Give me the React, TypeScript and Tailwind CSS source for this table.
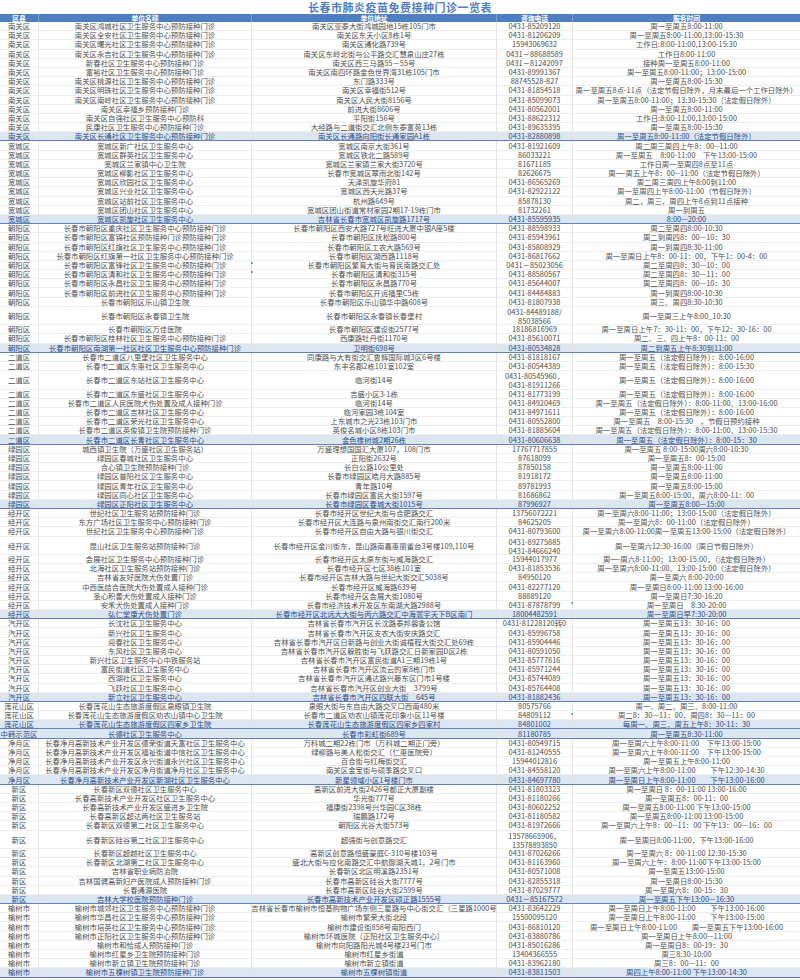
type Row = { name: string; addr: string; phone: string; time: string; tall?: boolean }
type Group = { district: string; rows: Row[] }

const r = (name: string, addr: string, phone: string, time: string, tall = false): Row => ({ name, addr, phone, time, tall })

const groups: Group[] = [
  {
    district: '南关区',
    rows: [
      r('南关区鸿城社区卫生服务中心预防接种门诊', '南关区亚泰大街鸿城园地15栋105门市', '0431-85209120', '周一至周五8:00-11:00'),
      r('南关区全安社区卫生服务中心预防接种门诊', '南关区东天小区8栋1号', '0431-81206209', '周一至周五8:00-11:00,13:00-15:30'),
      r('南关区曙光社区卫生服务中心预防接种门诊', '南关区通化路739号', '15943069632', '工作日:8:00-11:00,13:00-15:30'),
      r('南关区永吉社区卫生服务中心预防接种门诊', '南关区东岭北街与公平路交汇慧泉山庄27栋', '0431－88688589', '工作日8:00-11:00'),
      r('新春社区卫生服务中心预防接种门诊', '南关区西三马路55－55号', '0431－81242097', '接种周一至周五8:00-11:00'),
      r('富裕社区卫生服务中心预防接种门诊', '南关区南四环路金色世界湾31栋105门市', '0431-89991367', '周一至周五8:00-11:00；13:00-15:00'),
      r('南关区桃源社区卫生服务中心预防接种门诊', '东门路333号', '88745528-827', '周一至周五8:00-15:30'),
      r('南关区明珠社区卫生服务中心预防接种门诊', '南关区幸福街512号', '0431-81854518', '周一至周五8点-11点（法定节假日除外，月末最后一个工作日除外）'),
      r('南关区南岭社区卫生服务中心预防接种门诊', '南关区人民大街8156号', '0431-85099073', '周一至周五8:00-11:00；13:30-15:30（法定假日除外）'),
      r('南关区幸福乡预防接种门诊', '前进大街8606号', '0431-80562001', '周一至周五8:00-11:00'),
      r('南关区自强社区卫生服务中心预防科', '平阳街156号', '0431-88622312', '工作日:8:00-11:00,13:00-15:00'),
      r('民康社区卫生服务中心预防接种门诊', '大经路与二道街交汇北侧东泰富苑13栋', '0431-89635395', '周一至周五8:00-15:30'),
      r('南关区长通社区卫生服务中心预防接种门诊', '南关区长通路向阳街长通家园A1栋', '0431-82880898', '周一至周五8:00-11:00（法定节假日除外）'),
    ],
  },
  {
    district: '宽城区',
    rows: [
      r('宽城区新广社区卫生服务中心', '宽城区南京大街361号', '0431-81921609', '周二周三周四上午8：00--11:00'),
      r('宽城区群英社区卫生服务中心', '宽城区铁北二路589号', '86033221', '周一至周五　8:00-11:00　下午13:00-15:00'),
      r('宽城区兰家镇中心卫生院', '宽城区兰家镇兰家大街3720号', '81671185', '工作日周一至周四8点至11点'),
      r('宽城区柳影社区卫生服务中心', '长春市宽城区翠雨北街142号', '82626675', '周一-周五上午8：00--11:00（法定节假日除外）'),
      r('宽城区欣园社区卫生服务中心', '天泽凯旋华府81', '0431-86565269', '周二周三周四上午8:00到11:00'),
      r('宽城区兴业社区卫生服务中心', '宽城区西天光路37号', '0431-82922122', '周一至周四上午8:00-11:00（节假日除外）'),
      r('宽城区站前社区卫生服务中心', '杭州路649号', '85878130', '周二，周三，周四上午8点到11点接种'),
      r('宽城区团山社区卫生服务中心', '宽城区团山街道常材家园2期17-19栋门市', '81732261', '周一到周五'),
      r('宽城区凯旋社区卫生服务中心', '吉林省长春市宽城区凯旋路1717号', '0431-85595935', '8:00—20:00'),
    ],
  },
  {
    district: '朝阳区',
    rows: [
      r('长春市朝阳区重庆社区卫生服务中心预防接种门诊', '长春市朝阳区西安大路727号旺进大厦中银A座5楼', '0431-88598933', '周二至周四8:00-10:30'),
      r('长春市朝阳区富锦社区预防接种门诊预防接种门诊', '长春市朝阳区抚松路800号', '0431-85943961', '周二到周四8：00—10：30'),
      r('长春市朝阳区红旗社区卫生服务中心预防接种门诊', '长春市朝阳区工农大路569号', '0431-85808929', '周一到周四8:30-11:00'),
      r('长春市朝阳区红旗第一社区卫生服务中心预防接种门诊', '长春市朝阳区湖西路1118号', '0431-86817662', '周一至周日上午8：00-11：00，下午1：00-4：00'),
      r('长春市朝阳区富锋社区卫生服务中心预防接种门诊', '长春市朝阳区繁育大街与育民南路交汇处', '0431－85023056', '周二至周四8：30—10：00'),
      r('长春市朝阳区清和社区卫生服务中心预防接种门诊', '长春市朝阳区清和街315号', '0431-88580567', '周二至周四8：30—11：00'),
      r('长春市朝阳区永昌社区卫生服务中心预防接种门诊', '长春市朝阳区永昌路770号', '0431-85644007', '周二至周四8：00—10：30'),
      r('长春市朝阳区前进社区卫生服务中心预防接种门诊', '长春市朝阳区开运福里C5栋', '0431-84484883', '周一到周四8:00-10:30'),
      r('长春市朝阳区乐山镇卫生院', '长春市朝阳区乐山镇华中路608号', '0431-81807938', '周三、周四8:30-10:30'),
      r('长春市朝阳区永春镇卫生院', '长春市朝阳区永春镇长春堡村', '0431-84489188/\n85038566', '周一至周三上午8:00_10:30', true),
      r('长春市朝阳区万佳医院', '长春市朝阳区建设街2577号', '18186816969', '周一至周日上午7：30-11：00，下午12：30-16：00'),
      r('长春市朝阳区桂林社区卫生服务中心预防接种门诊', '西康路牡丹街1170号', '0431-85610071', '周二、三、四上午8：00-11：00'),
      r('长春市朝阳区南湖第一社区社区卫生服务中心预防接种门诊', '卫明街698号', '0431-80534828', '周二到周五上午8:30到11:00'),
    ],
  },
  {
    district: '二道区',
    rows: [
      r('长春市二道区八里堡社区卫生服务中心', '同康路与大有街交汇鲁辉国际城3区6号楼', '0431-81818167', '周一至周五（法定假日除外）：8:00-16:00'),
      r('长春市二道区东惠社区卫生服务中心', '东丰名郡2栋101室102室', '0431-80544389', '周一至周五（法定假日除外）：8:00-15:30'),
      r('长春市二道区东站社区卫生服务中心', '临河街14号', '0431-80545960，\n0431-81911266', '周一至周五（法定假日除外）：8:00-16:00', true),
      r('长春市二道区东盛社区卫生服务中心', '吉盛小区3-1栋', '0431-81773199', '周一至周五（法定假日除外）：8:00-16:00'),
      r('长春市二道区人民医院犬伤处置及成人接种门诊', '临河街14号', '0431-84920469', '周一至周五（法定假日除外）：8:00-11:00、13:00-16:00'),
      r('长春市二道区吉林社区卫生服务中心', '临河家园3栋104室', '0431-84971611', '周一至周五（法定假日除外）：8:00-16:00'),
      r('长春市二道区荣光社区卫生服务中心', '上东城市之光23栋103门市', '0431-80552800', '周一至周五　8:00-15:30　，节假日预约接种'),
      r('长春市二道区英俊镇卫生院预防接种门诊', '英俊名城小区8栋103门市', '0431-81885604', '周一至周五（法定假日除外）：8:00-11:00、13:00-15:30'),
      r('长春市二道区长青社区卫生服务中心', '金色橡树城2期26栋', '0431-80606638', '周一至周五（法定假日除外）：8:00-15：30'),
    ],
  },
  {
    district: '绿园区',
    rows: [
      r('城西镇卫生院（万盛社区卫生服务站）', '万盛理想国国汇大厦107，108门市', '17767717855', '周一至周五 8:00-15:00周六8:00-10:30'),
      r('绿园区春城社区卫生服务中心', '正阳街2632号', '87618099', '周一至周五8：00-15:00'),
      r('合心镇卫生院预防接种门诊', '长白公路10公里处', '87850158', '周一至周五8:00-11:00'),
      r('绿园区普阳社区卫生服务中心', '长春市绿园区皓月大路885号', '81918172', '周一至周五8:00-11:00'),
      r('绿园区青年社区卫生服务中心', '青年路10号', '89781993', '周一至周五8:00-15:00'),
      r('绿园区同心社区卫生服务中心', '长春市绿园区富民大街1597号', '81686862', '周一至周五8:00-15:00，周六8:00-11：00'),
      r('绿园区正阳社区卫生服务中心', '长春市绿园区春城大街1015号', '87996927', '周一至周五8:00—15:00'),
    ],
  },
  {
    district: '经开区',
    rows: [
      r('世纪社区卫生服务站预防接种门诊', '长春市经开区世纪大街与合肥路交汇', '13756072221', '周一至周六8:00-11:00；13:00-15:00（法定假日除外）'),
      r('东方广场社区卫生服务中心预防接种门诊', '长春市经开区大连路与泉州南街交汇南行200米', '84625205', '周一至周六8：00-11:00（法定假日除外）'),
      r('世纪社区卫生服务中心预防接种门诊', '长春市经开区自由大路与银川街交汇', '0431-80793600', '周一至周六8:00-11:00周一至周五13:00-15:00（法定假日除外）'),
      r('昆山社区卫生服务站预防接种门诊', '长春市经开区金川街东，昆山路南嘉惠丽畲台3号楼109,110号', '0431-89275885\n0431-84666240', '周一至周六12:30-16:00（周日节假日除外）', true),
      r('会展社区卫生服务中心预防接种门诊', '长春市经开区太原东街与威海路交汇', '15944017977', '周一-周六8-11:00；13:00-15:00，（法定假日除外）'),
      r('北海社区卫生服务站预防接种门诊', '长春市经开区七区38栋101室', '0431-81853536', '周一至周六8:00-11:00、13:00-15:00（法定假日除外）'),
      r('吉林省友好医院犬伤处置门诊', '长春市经开区吉林大路与世纪大街交汇5038号', '84950120', '周一至周六 8:00-20:00'),
      r('中西医结合医院犬伤处置成人接种门诊', '长春市经开区威海路639号', '0431-82277120', '周一至周日8:00-11:00 13:00-16:00'),
      r('圣心积善犬伤处置成人接种门诊', '长春市经开区会展大街1080号', '88889120', '周一至周日7:30-16:20'),
      r('安禾犬伤处置成人接种门诊', '长春市经济技术开发区东南湖大路2988号', '0431-87878799', '周一至周日　8:30-20:00'),
      r('弘仁堂康犬伤处置门诊', '长春市经开区北远大大街与丙六路交汇中海寰宇天下B区南门', '18004482591', '周一至周日早7:30-20:00'),
    ],
  },
  {
    district: '汽开区',
    rows: [
      r('长沈社区卫生服务中心', '吉林省长春市汽开区长沈路泰邦馨香公馆', '0431-81228120转0', '周一至周五13：30-16：00'),
      r('新兴社区卫生服务中心', '吉林省长春市汽开区支农大街安庆路交汇', '0431-85996758', '周一至周五13：30-16：00'),
      r('迎春社区卫生服务中心', '吉林省长春市汽开区日新路与创业大街诚禧程大街交汇处69栋', '0431-85904446', '周一至周五13：30-16：00'),
      r('东风社区卫生服务中心', '吉林省长春市汽开区躲胜街与飞跃路交汇日新家园D区2栋', '0431-80591050', '周一至周五13：30-16：00'),
      r('新兴社区卫生服务中心中铁服务站', '吉林省长春市汽开区富民街道A1三期19栋1号', '0431-85777816', '周一至周五13：30-16：00'),
      r('富民街道社区卫生服务中心', '吉林省长春市汽开区流云的家8栋门市', '0431-85971244', '周一至周五13：30-16：00'),
      r('西湖社区卫生服务中心', '吉林省长春市汽开区通达路兴藤东区门市1号楼', '0431-85744089', '周一至周五13：30-16：00'),
      r('飞跃社区卫生服务中心', '吉林省长春市汽开区创业大街　3799号', '0431-85764408', '周一至周五13：30-16：00'),
      r('新立社区卫生服务中心', '吉林省长春市汽开区四联大街　645号', '0431-81882436', '周一至周五13：30-16：00'),
    ],
  },
  {
    district: '莲花山区',
    rows: [
      r('长春莲花山生态旅游度假区泉眼镇卫生院', '泉眼大街与东自由大路交叉口西南480米', '80575766', '周一、周二、周三、8:00-11:00'),
      r('长春莲花山生态旅游度假区劝农山镇中心卫生院', '长春市二道区劝农山镇莲花印象小区11号楼', '84809112', '周二8：30—11：00，周四8：30—11：00'),
      r('长春莲花山生态旅游度假区四家乡卫生院', '长春莲花山生态旅游度假区四家乡四家村', '84801002', '每周一、周三、周五上午8：30-11：30'),
    ],
  },
  {
    district: '中韩示范区',
    rows: [r('长德社区卫生服务中心', '长春市彩虹街689号', '81180785', '周一至周五8:30-11:00')],
  },
  {
    district: '净月区',
    rows: [
      r('长春净月高新技术产业开发区德荣街道天富社区卫生服务中心', '万科城二期22栋门市（万科城二期正门旁）', '0431-80549715', '周一至周六上午8:00-11:00　下午13:00-15:00'),
      r('长春净月高新技术产业开发区福祉街道中信社区卫生服务中心', '绿柳路与美人松街交汇（仁惠医院旁）', '0431-81240555', '周一至周六上午8:00-11:00　下午13:00-15:00'),
      r('长春净月高新技术产业开发区永兴街道永兴社区卫生服务中心', '百合街与红梅街交汇', '15944012816', '周一至周五上午8:00-11:00'),
      r('长春净月高新技术产业开发区净月街道净月社区卫生服务中心', '南关区金宝街与硕季路交叉口', '0431-84558120', '周一至周六上午8:00-11:00　　下午12:30-14:30'),
      r('长春净月高新技术产业开发区新湖社区卫生服务中心', '新星领域小区1号楼门市', '0431-84697780', '周一至周日上午8:00-11:00　　下午13:00-16:00'),
    ],
  },
  {
    district: '新区',
    rows: [
      r('长春新区双德社区卫生服务中心', '高新区前进大街2426号都正大厦副楼', '0431-81803323', '周一至周日 8：00-11:00 13:00-16:00'),
      r('长春高新技术产业开发区社区卫生服务中心', '华光街777号', '0431-81180266', '周一至周五8：00-11：00'),
      r('长春高新技术产业开发区盛进乡卫生院', '福康街2398号兴华园C区38栋', '0431-80602252', '周一至周五8:00-11:00 下午13:00-15:00'),
      r('长春高新区超达两社区卫生服务站', '瑞鹏路172号', '0431-81180582', '周一至周五8:00-11:00 13:00-15:00'),
      r('长春新区双德第二社区卫生服务中心', '朝阳区光谷大街573号', '0431-81972666', '周一至周六上午8：00--11：00 下午13：00—16：00'),
      r('长春新区硅谷第二社区卫生服务中心', '超强街与创意路交汇', '13578665906，\n13578893850', '周一至周日8:00-11:00，下午13:00-16:00', true),
      r('长春新区超越社区卫生服务中心', '高新区创意路恒盛豪庭C-310号楼103号', '0431-87026266', '周一至周六 8：00-11:00 12:30-15:30'),
      r('长春新区北湖第二社区卫生服务中心', '盛北大街与应化南路交汇中航御湖天城1，2号门市', '0431-81163960', '周一至周六上午：8:00-11:00下午13:00-15:00'),
      r('吉林省职业病防治院', '长春新区北区明溪路2351号', '0431-80571008', '周一至周五13:00-15:00'),
      r('吉林国健高新妇产医院成人预防接种门诊', '长春市高新区硅谷大街7777号', '0431-82855318', '周一至周日8:00-15:30'),
      r('长春通源医院', '长春市高新区硅谷大街2599号', '0431-87029777', '周一至周六8：00-15：30'),
      r('吉林大学校医院预防接种门诊', '长春市高新技术产业开发区硕正路1555号', '0431－85167572', '周一至周五下午13:00—16:30'),
    ],
  },
  {
    district: '榆树市',
    rows: [
      r('榆树市城郊社区卫生服务中心预防接种门诊', '吉林省长春市榆树市恒基购物广场东侧三星路与中心街交汇（三星路1000号', '0431-83642229', '周一至周日上午8:00-11:00　　下午13:00-16:00'),
      r('榆树市华昌社区卫生服务中心预防接种门诊', '榆树市繁荣大街北段', '15500095120', '周一至周日上午8:00-11:00　　下午13:00-15:00'),
      r('榆树市培英社区卫生服务中心预防接种门诊', '榆树市建设街858号南阳西门', '0431-86810120', '周一至周日上午8:00-11:00　　周一至周五下午13:00-16:00'),
      r('榆树市正阳社区卫生服务中心预防接种门诊', '榆树市环城医院（正阳社区卫生服务中心）', '0431-83880786', '周一至周日上午8:00—11:00'),
      r('榆树市和恰成人预防接种门诊', '榆树市向阳路阳光城4号楼23号门市', '0431-85016286', '周一至周日8：00-19：30'),
      r('榆树市红星乡卫生院预防接种门诊', '榆树市红星乡街道', '13404366555', '周三8:30-10:00'),
      r('榆树市新立镇卫生院预防接种门诊', '榆树市新立镇街道', '0431-83962180', '周三8：00—11：00'),
      r('榆树市五棵树镇卫生院预防接种门诊', '榆树市五棵树镇街道', '0431-83811503', '周四上午8:00-11:00 下午13:00-14:30'),
    ],
  },
]

const cols = 'grid grid-cols-[39px_213px_245px_76px_227px]'
const cell = 'flex items-center justify-center whitespace-nowrap'

function TableRow({ district, row, last }: { district: string; row: Row; last: boolean }) {
  const tone = last
    ? 'bg-[#dce6f1] text-[#2e4c86] border-b border-[#5b80c4]'
    : 'bg-white text-[#4d4d4d] border-b border-[#eeeeee]'
  // only the one over-long address in the sheet gets clipped at the cell edges
  const clip = row.addr.length > 32 ? 'overflow-x-clip' : ''
  return (
    <div className={`${cols} ${tone} ${row.tall ? 'h-[18.4px]' : 'h-[9.2px]'} leading-[8px]`}>
      <div className={`${cell} border-r border-[#e3e3e3]`}>{district}</div>
      <div className={`${cell} border-r border-[#e3e3e3]`}>{row.name}</div>
      <div className={`${cell} ${clip} border-r border-[#e3e3e3]`}>{row.addr}</div>
      <div className={`${cell} flex-col border-r border-[#e3e3e3] ${row.tall ? 'leading-[9px]' : ''}`}>
        {row.phone.split('\n').map((p) => (
          <span key={p}>{p}</span>
        ))}
      </div>
      <div className={cell}>{row.time}</div>
    </div>
  )
}

export default function App() {
  return (
    <div className="relative h-[980px] w-[800px] overflow-hidden bg-white font-['Noto_Sans_CJK_SC',sans-serif] text-[7.4px]">
      <div className="flex h-[14px] items-center justify-center text-[11px] font-bold leading-none tracking-[0.5px] text-[#4f7cc3]">
        长春市肺炎疫苗免费接种门诊一览表
      </div>
      <div className={`${cols} h-[8px] bg-[#4f7fc3] text-[6.8px] font-bold leading-[7px] text-white`}>
        <div className={`${cell} border-r border-[#7fa1d4]`}>区县</div>
        <div className={`${cell} border-r border-[#7fa1d4]`}>单位名称</div>
        <div className={`${cell} border-r border-[#7fa1d4]`}>单位地址</div>
        <div className={`${cell} border-r border-[#7fa1d4]`}>咨询电话</div>
        <div className={cell}>服务时间</div>
      </div>
      {groups.map((g) =>
        g.rows.map((row, i) => (
          <TableRow key={g.district + i} district={g.district} row={row} last={i === g.rows.length - 1} />
        ))
      )}
      <span className="absolute left-[251px] top-[262px] h-[2px] w-[2px] rounded-full bg-[#3fa34d]" />
      <span className="absolute left-[251px] top-[271px] h-[2px] w-[2px] rounded-full bg-[#3fa34d]" />
      <span className="absolute left-[571px] top-[602px] h-[2px] w-[2px] rounded-full bg-[#3fa34d]" />
      <span className="absolute left-[571px] top-[713px] h-[2px] w-[2px] rounded-full bg-[#3fa34d]" />
    </div>
  )
}
